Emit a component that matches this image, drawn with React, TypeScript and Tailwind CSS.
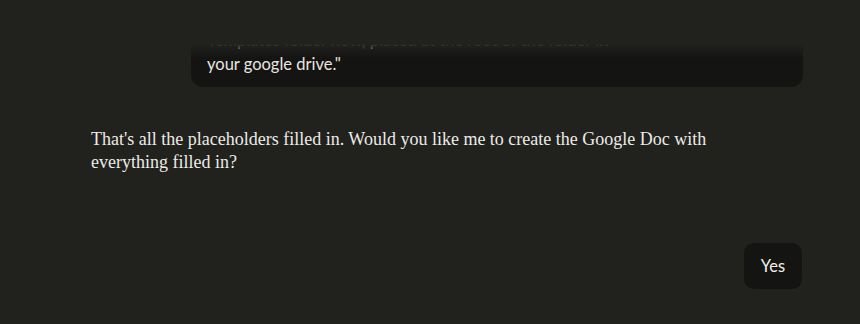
export default function App() {
  return (
    <div className="relative h-[324px] w-[860px] overflow-hidden bg-[#21211e]">
      <div className="flex flex-col">
        <div className="ml-[191px] mr-[57px] mt-[-8px] flex flex-col rounded-[12px] bg-[#141413] px-4 pb-[11px] pt-3 text-[16.5px] leading-[24px] text-[#e8e6e0]" style={{ fontFamily: 'Lato, "Open Sans", sans-serif' }}>
          <p>of the template, everything was saved directly to your</p>
          <p>Templates folder now, placed at the root of the folder in</p>
          <p>your google drive."</p>
        </div>
        <p className="ml-[91px] mr-[130px] mt-[41px] text-[18px] leading-[23px] text-[#ecebe6]" style={{ fontFamily: '"Liberation Serif", "DejaVu Serif", serif' }}>
          That's all the placeholders filled in. Would you like me to create the Google Doc with everything filled in?
        </p>
        <div className="mr-[58px] mt-[69px] flex justify-end">
          <div className="flex h-[46px] w-[58px] items-center justify-center rounded-[10px] bg-[#141413] text-[16.5px] text-[#f0efea]" style={{ fontFamily: 'Lato, "Open Sans", sans-serif' }}>
            Yes
          </div>
        </div>
      </div>
      <div className="pointer-events-none absolute inset-x-0 top-0 h-[58px] bg-gradient-to-b from-[#21211e] from-[76%] to-transparent" />
    </div>
  );
}
